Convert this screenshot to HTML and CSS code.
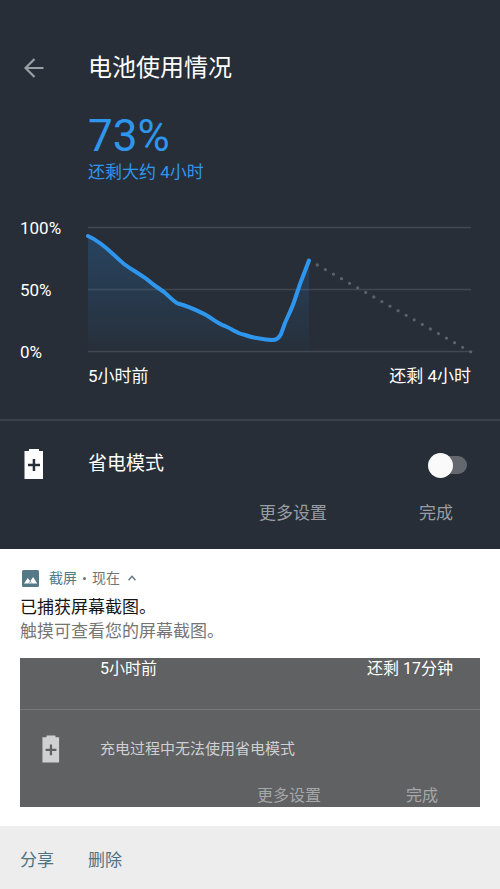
FILE: index.html
```html
<!DOCTYPE html>
<html lang="zh-CN">
<head>
<meta charset="utf-8">
<meta name="viewport" content="width=device-width, initial-scale=1">
<title>电池使用情况</title>
<link rel="stylesheet" href="styles.css">
</head>
<body>
<section class="battery">
  <header class="battery-header">
    <button class="back" type="button" aria-label="返回">
      <svg width="20" height="20" viewBox="0 0 20 20" fill="none" stroke="#9a9fa6" stroke-width="2.200"><path d="M19.500 10H2M10.500 1L1.500 10l9 9"/></svg>
    </button>
    <h1 class="title">电池使用情况</h1>
  </header>
  <div class="summary">
    <p class="level">73%</p>
    <p class="estimate">还剩大约 4小时</p>
  </div>
  <div class="chart">
    <div class="y-axis"><span>100%</span><span>50%</span><span>0%</span></div>
    <svg class="plot" viewBox="0 0 383 148" overflow="visible" fill="none">
      <defs>
        <linearGradient id="fade" x1="0" y1="20" x2="0" y2="135" gradientUnits="userSpaceOnUse">
          <stop offset="0" stop-color="#2a8ff0" stop-opacity=".22"/>
          <stop offset="1" stop-color="#2a8ff0" stop-opacity=".02"/>
        </linearGradient>
      </defs>
      <path d="M0 11.500H383M0 73.500H383M0 135.500H383" stroke="#414850" stroke-width="1.500"/>
      <path d="M0 20C16 27 25 39 36 48C48 57 54 58 66 69L76 76C82 81 86 86 90 87.500C103 91 108 94 118 99C125 103 130 108 137 110C148 115 148 117 157 119C168 123 176 123 183 124C189 124 191 122 193 118L197 107C200 100 204 92 206 86L212 68L221 44.500V135H0Z" fill="url(#fade)"/>
      <path d="M0 20C16 27 25 39 36 48C48 57 54 58 66 69L76 76C82 81 86 86 90 87.500C103 91 108 94 118 99C125 103 130 108 137 110C148 115 148 117 157 119C168 123 176 123 183 124C189 124 191 122 193 118L197 107C200 100 204 92 206 86L212 68L221 44.500" stroke="#2f96ee" stroke-width="4" stroke-linecap="round" stroke-linejoin="round"/>
      <path d="M229.300 49L383 136" stroke="#59616a" stroke-width="3.300" stroke-linecap="round" stroke-dasharray="0 9.280"/>
    </svg>
    <div class="x-axis"><span>5小时前</span><span>还剩 4小时</span></div>
  </div>
  <div class="saver">
    <svg class="saver-icon" width="20" height="30" viewBox="0 0 20 30"><path fill="#fff" fill-rule="evenodd" d="M5 0h10v2h4v28H.500V2H5zM8.700 10v4.700H4v2.500h4.700V22h2.500v-4.800H16v-2.500h-4.800V10z"/></svg>
    <label class="saver-label" for="saver">省电模式</label>
    <input class="switch" id="saver" type="checkbox" role="switch">
  </div>
  <div class="actions">
    <button type="button">更多设置</button>
    <button type="button">完成</button>
  </div>
</section>
<article class="notice">
  <div class="notice-body">
    <div class="notice-header">
      <svg class="notice-icon" width="17" height="17" viewBox="0 0 17 17"><rect width="17" height="17" rx="1.500" fill="#557987"/><path fill="#fff" d="M2 13.500l3.800-5.500 2.400 3.200 3-4.200 4 6.500z"/><path d="M6.700 13.500l1.500-2.300 1.600 2.300" fill="none" stroke="#557987" stroke-width=".6"/></svg>
      <span class="app">截屏</span><span class="dot"></span><span>现在</span>
      <button class="collapse" type="button" aria-label="收起">
        <svg width="8" height="6" viewBox="0 0 8 6" fill="none" stroke="#65777f" stroke-width="1.500"><path d="M.500 5.300l3.500-4 3.500 4"/></svg>
      </button>
    </div>
    <h2 class="notice-title">已捕获屏幕截图。</h2>
    <p class="notice-text">触摸可查看您的屏幕截图。</p>
    <div class="preview">
      <div class="preview-axis"><span>5小时前</span><span>还剩 17分钟</span></div>
      <div class="preview-saver">
        <svg width="18" height="28" viewBox="0 0 20 30"><path fill="#cfd0d1" fill-rule="evenodd" d="M5 0h10v2h4v28H.500V2H5zM8.700 10v4.700H4v2.500h4.700V22h2.500v-4.800H16v-2.500h-4.800V10z"/></svg>
        <span>充电过程中无法使用省电模式</span>
      </div>
      <div class="preview-actions"><span>更多设置</span><span>完成</span></div>
    </div>
  </div>
  <footer class="notice-actions">
    <button type="button">分享</button>
    <button type="button">删除</button>
  </footer>
</article>
</body>
</html>
```

FILE: styles.css
```css
* {
  box-sizing: border-box;
}

body {
  margin: 0;
  background: #fff;
  color: #fff;
  font-family: Roboto, "Noto Sans CJK SC", sans-serif;
  font-size: 17px;
  line-height: 24px;
}

h1, h2, p {
  margin: 0;
  font-weight: 400;
}

button {
  padding: 0;
  border: 0;
  background: none;
  color: inherit;
  font: inherit;
  cursor: pointer;
}

svg {
  display: block;
}

.battery {
  padding-top: 48px;
  background: #272e37;
}

.battery-header {
  display: grid;
  grid-template-columns: 64px 1fr;
  align-items: center;
  height: 40px;
  padding-left: 24px;
}

.title {
  font-size: 24px;
  line-height: 40px;
}

.summary {
  padding: 24px 28px 32px 88px;
  color: #2f96ee;
}

.level {
  font-size: 44px;
  line-height: 48px;
}

.chart {
  display: grid;
  grid-template-columns: 68px 1fr;
  padding: 0 29px 31px 20px;
}

.y-axis {
  display: flex;
  flex-direction: column;
  justify-content: space-between;
}

.plot {
  width: 100%;
  height: auto;
}

.x-axis {
  grid-column: 2;
  display: flex;
  justify-content: space-between;
}

.saver {
  display: grid;
  grid-template-columns: 64px 1fr auto;
  align-items: center;
  height: 82px;
  padding: 6px 33px 0 24px;
  border-top: 2px solid #3b424a;
}

.saver-label {
  font-size: 19px;
}

.switch {
  appearance: none;
  display: grid;
  align-items: center;
  width: 39px;
  height: 25px;
  margin: 2px 0 0;
  cursor: pointer;
}

.switch::before,
.switch::after {
  content: "";
  grid-area: 1 / 1;
}

.switch::before {
  justify-self: end;
  width: 34px;
  height: 18px;
  border-radius: 9px;
  background: #64676d;
}

.switch::after {
  width: 25px;
  height: 25px;
  border-radius: 50%;
  background: #fafafa;
}

.switch:checked::after {
  justify-self: end;
}

.actions {
  display: flex;
  justify-content: flex-end;
  gap: 92px;
  padding: 0 47px 24px;
  color: #999da3;
}

.notice-body {
  padding: 15px 20px 19px;
}

.notice-header {
  display: flex;
  align-items: center;
  height: 28px;
  margin-bottom: 3px;
  color: #6f7678;
  font-size: 14px;
}

.notice-icon {
  margin: 0 10px 0 2px;
}

.app {
  color: #557987;
}

.dot {
  width: 3px;
  height: 3px;
  margin: 0 6px;
  border-radius: 50%;
  background: #6f7678;
}

.collapse {
  margin-left: 8px;
}

.notice-title {
  color: #161616;
  font-size: 17px;
}

.notice-text {
  color: #757575;
}

.preview {
  margin-top: 15px;
  background: #606163;
  font-size: 16px;
}

.preview-axis {
  display: flex;
  justify-content: space-between;
  height: 51px;
  padding: 0 27px 0 80px;
  line-height: 22px;
}

.preview-saver {
  display: grid;
  grid-template-columns: 58px 1fr;
  align-items: center;
  height: 76px;
  padding-left: 22px;
  padding-top: 3px;
  border-top: 1px solid #77797b;
  color: #cfd0d1;
  font-size: 15px;
}

.preview-actions {
  display: flex;
  justify-content: flex-end;
  gap: 85px;
  padding-right: 42px;
  color: #a6a7a9;
  line-height: 22px;
}

.notice-actions {
  display: flex;
  gap: 34px;
  padding: 22px 20px 17px;
  background: #ededed;
  color: #4f7380;
}
```
